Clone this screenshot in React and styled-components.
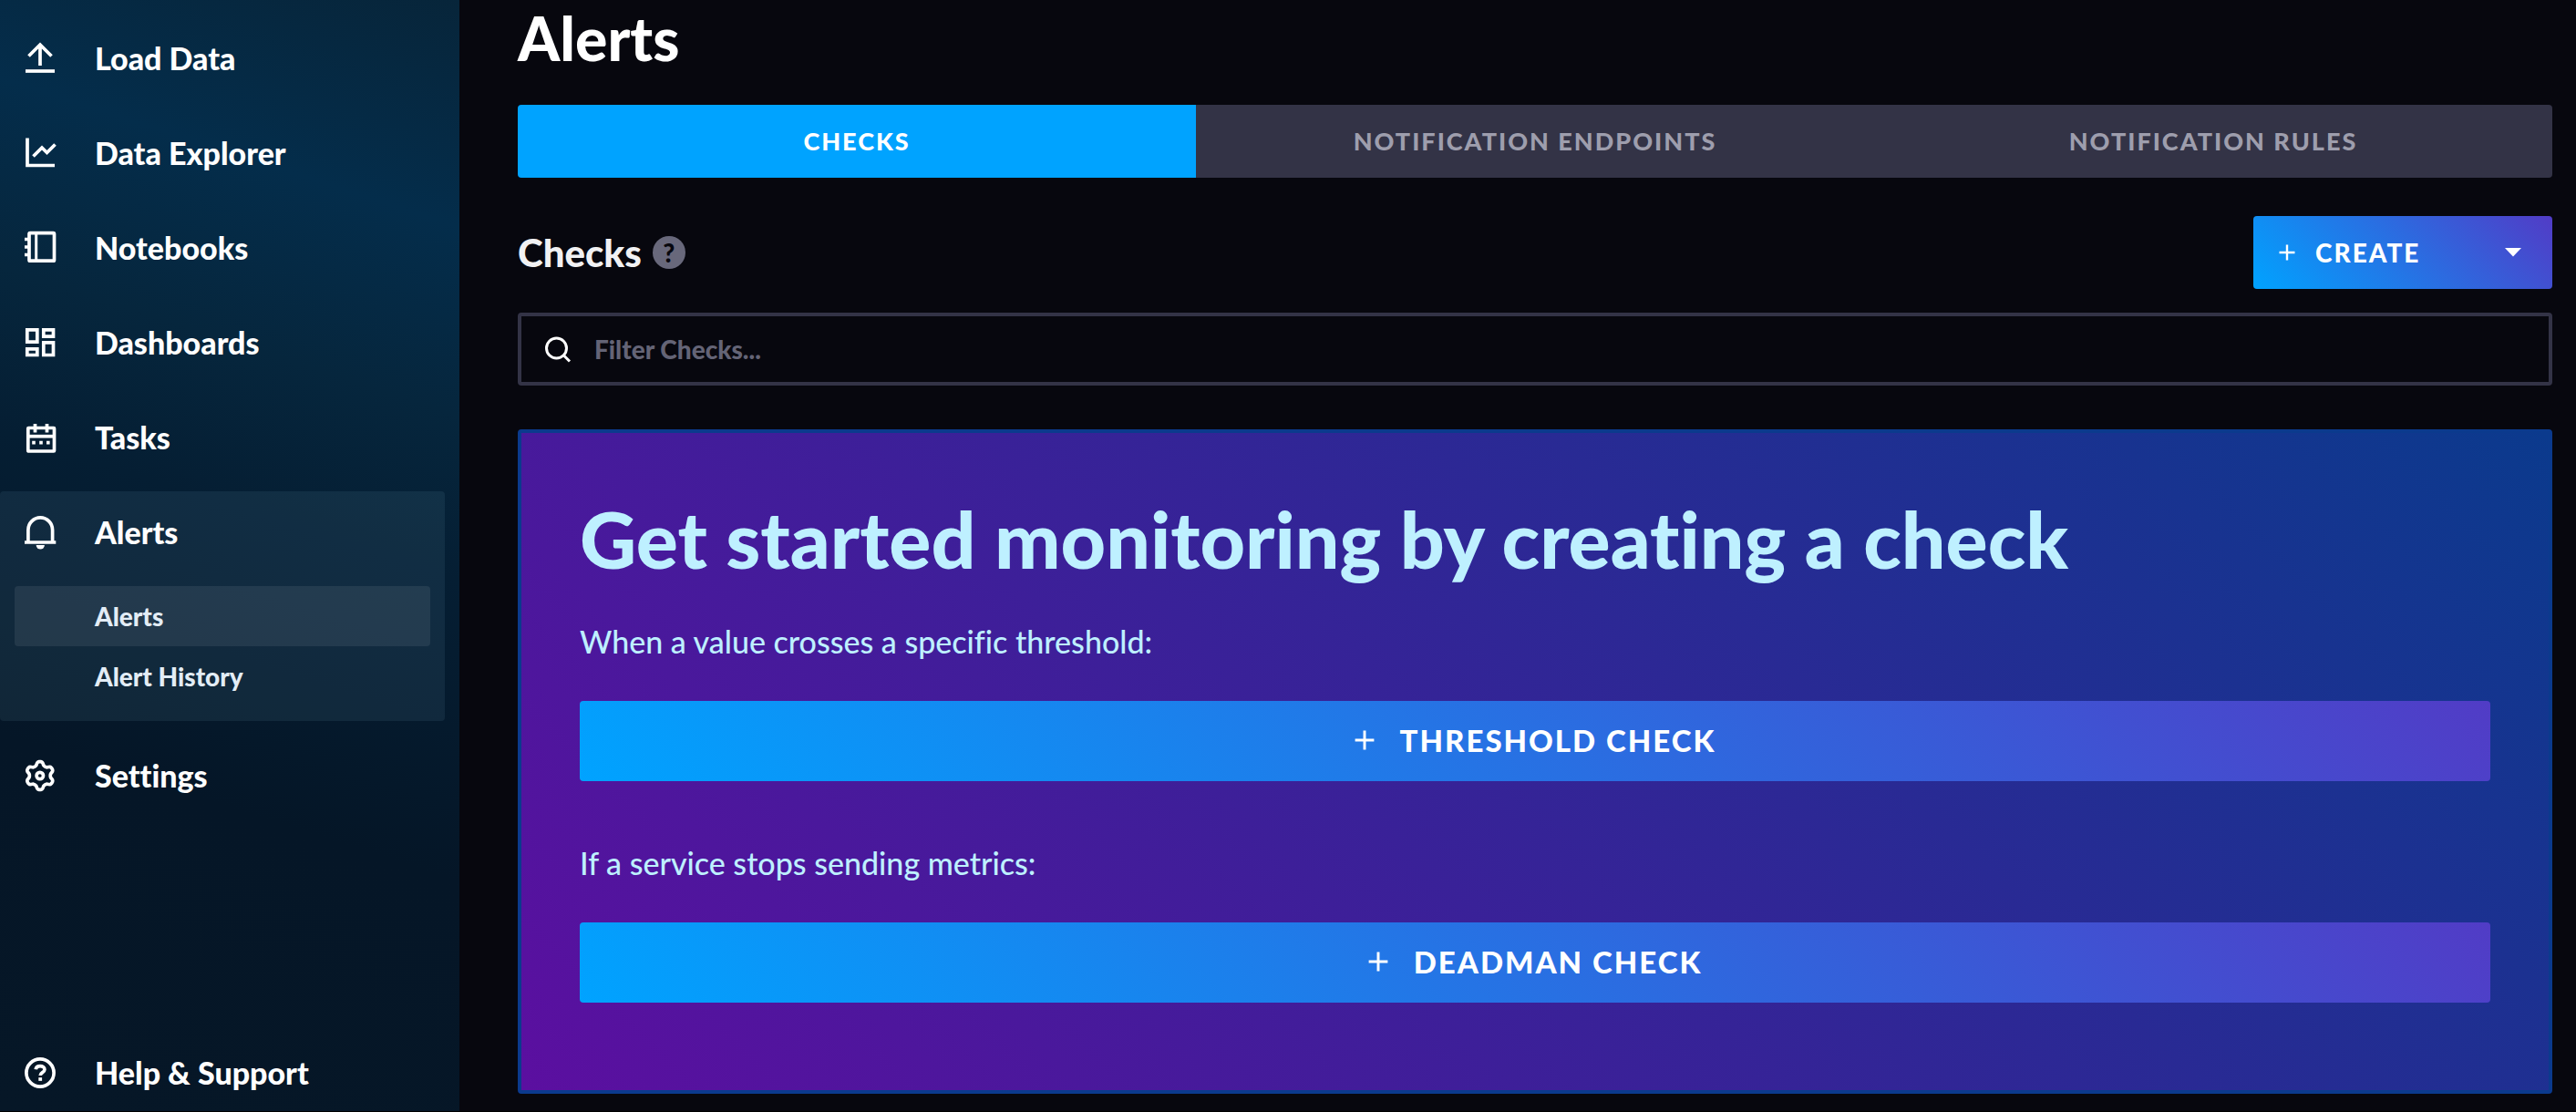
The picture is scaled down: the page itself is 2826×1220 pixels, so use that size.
import React from "react";
import styled, { createGlobalStyle, css } from "styled-components";

const font = `Lato, "Liberation Sans", sans-serif`;
const primaryGradient = "linear-gradient(45deg, #00a3ff, #513cc6)";

const GlobalStyle = createGlobalStyle`
  *, *::before, *::after { box-sizing: border-box; }
  body {
    margin: 0;
    background: #07070e;
    font-family: ${font};
    font-variant-ligatures: none;
  }
  h1, h2, h3, p, ul { margin: 0; padding: 0; }
  ul { list-style: none; }
  button, input { font-family: inherit; }
`;

const Page = styled.div`
  display: flex;
  min-height: 100vh;
  border-bottom: 1px solid #000;
`;

const Sidebar = styled.nav`
  display: flex;
  flex-direction: column;
  flex: 0 0 504px;
  padding-top: 19px;
  background: linear-gradient(
    198deg,
    #07253a 0%,
    #042d4b 18%,
    #06263d 33%,
    #051e33 46%,
    #051627 70%,
    #061727 100%
  );
`;

const NavList = styled.ul`
  display: flex;
  flex-direction: column;
  gap: 14px;
  margin-bottom: auto;
`;

const NavGroup = styled.li`
  margin-right: 16px;
  border-radius: 4px;
  ${(p) =>
    p.$active &&
    css`
      margin-bottom: 1px;
      padding-bottom: 16px;
      background: rgba(170, 230, 255, 0.08);
    `}
`;

const NavLink = styled.a`
  display: flex;
  align-items: center;
  gap: 43px;
  height: ${(p) => (p.$footer ? 84 : 90)}px;
  padding-left: 27px;
  color: #fff;
  font-size: 34px;
  font-weight: 900;
  line-height: 40px;
  text-decoration: none;
`;

const NavLabel = styled.span`
  padding-bottom: 1px;
`;

const SubList = styled.ul`
  padding: 14px 16px 0;
`;

const SubLink = styled.a`
  display: flex;
  align-items: center;
  height: 66px;
  padding-left: 88px;
  border-radius: 4px;
  background: ${(p) => (p.$active ? "rgba(255, 255, 255, 0.08)" : "none")};
  color: #e3edf6;
  font-size: 28px;
  font-weight: 900;
  text-decoration: none;
`;

const Icon = styled.svg`
  flex: none;
  overflow: visible;
  fill: none;
  stroke: currentColor;
  stroke-width: ${(p) => p.$weight || 3.7};
`;

const Main = styled.main`
  flex: 1;
  min-width: 0;
  padding: 6px 26px 19px 64px;
`;

const PageTitle = styled.h1`
  margin-bottom: 37px;
  color: #fff;
  font-size: 66px;
  font-weight: 900;
  line-height: 72px;
`;

const Tabs = styled.div`
  display: grid;
  grid-template-columns: repeat(3, 1fr);
  overflow: hidden;
  border-radius: 4px;
`;

const Tab = styled.button`
  height: 80px;
  padding: 0 0 2px;
  border: 0;
  background: ${(p) => (p.$active ? "#00a3ff" : "#333346")};
  color: ${(p) => (p.$active ? "#fff" : "#9e9ead")};
  font-size: 27px;
  font-weight: 900;
  letter-spacing: 2px;
`;

const SectionHeader = styled.header`
  display: flex;
  align-items: center;
  gap: 12px;
  margin: 42px 0 26px;
`;

const SectionTitle = styled.h2`
  color: #f1f1f3;
  font-size: 42px;
  font-weight: 900;
  line-height: 48px;
`;

const HelpBadge = styled.button`
  display: flex;
  align-items: center;
  justify-content: center;
  width: 36px;
  height: 36px;
  padding: 0;
  border: 0;
  border-radius: 50%;
  background: #68687b;
  color: #07070e;
  font-size: 28px;
  font-weight: 900;
  line-height: 36px;
`;

const CreateButton = styled.button`
  display: flex;
  align-items: center;
  gap: 22px;
  width: 328px;
  height: 80px;
  margin-left: auto;
  padding: 0 34px 0 28px;
  border: 0;
  border-radius: 4px;
  background: ${primaryGradient};
  color: #fff;
  font-size: 28px;
  font-weight: 900;
  letter-spacing: 2px;
`;

const Caret = styled.svg`
  margin-left: auto;
  fill: currentColor;
`;

const SearchBox = styled.label`
  display: flex;
  align-items: center;
  gap: 26px;
  height: 80px;
  margin-bottom: 48px;
  padding: 0 26px;
  border: 4px solid #333346;
  border-radius: 4px;
  color: #fff;
`;

const SearchInput = styled.input`
  flex: 1;
  min-width: 0;
  padding: 0;
  border: 0;
  outline: 0;
  background: none;
  color: #fff;
  font-size: 28px;
  font-weight: 900;

  &::placeholder {
    color: #646476;
    opacity: 1;
  }
`;

const Panel = styled.section`
  padding: 64px 64px 96px;
  border: 4px solid #0b3a8d;
  border-radius: 4px;
  background: linear-gradient(45deg, #5b0fa0, #0b3a8d) padding-box;
  color: #bef0ff;
`;

const PanelTitle = styled.h3`
  padding-top: 4px;
  margin-bottom: 41px;
  font-size: 86px;
  font-weight: 900;
  line-height: 96px;
`;

const CheckOption = styled.div`
  & + & {
    margin-top: 66px;
  }
`;

const OptionText = styled.p`
  margin-bottom: 41px;
  font-size: 34px;
  font-weight: 500;
  line-height: 48px;
`;

const OptionButton = styled.button`
  display: flex;
  align-items: center;
  justify-content: center;
  gap: 28px;
  width: 100%;
  height: 88px;
  padding: 0 0 2px;
  border: 0;
  border-radius: 4px;
  background: ${primaryGradient};
  color: #fff;
  font-size: 33px;
  font-weight: 900;
  letter-spacing: 2px;
`;

const gearPath =
  Array.from({ length: 120 }, (_, i) => {
    const angle = (i / 120) * Math.PI * 2;
    const wave = Math.cos(6 * (angle - Math.PI / 2));
    const radius = 13.4 + 2.1 * Math.tanh(1.6 * wave);
    const x = 16.8 + radius * Math.cos(angle);
    const y = 17 + radius * Math.sin(angle);
    return `${i ? "L" : "M"}${x.toFixed(2)} ${y.toFixed(2)}`;
  }).join("") + "Z";

const icons = {
  load: (
    <>
      <path d="M4.5 14.5 17 2l12.5 12.5M17 2v23" />
      <path d="M1 31h32" />
    </>
  ),
  explorer: (
    <>
      <path d="M3 .5v30h30" />
      <path d="m9.5 20.5 9.5-9.5 5.5 5.5 9-9" />
    </>
  ),
  notebooks: (
    <>
      <rect x="5" y=".6" width="27.5" height="30.6" rx="1" />
      <path d="M12.7 1v30" strokeWidth="3" />
      <path d="M0 7.5h5M0 16h5M0 24.5h5" />
    </>
  ),
  dashboards: (
    <path d="M2.8 2.8h11v13.4h-11zM20.8 2.8h10.7v7.3h-10.7zM2.8 23.8h11v6.7h-11zM20.8 16.8h10.7v13.7h-10.7z" />
  ),
  tasks: (
    <>
      <rect x="3.8" y="6.5" width="28.7" height="25.5" rx=".6" />
      <path d="M3 15.7h30" />
      <path d="M11.5 2v9.5M24.5 2v9.5" />
      <path d="M8.2 22.7h3.6M16.2 22.7h3.6M24 22.7h3.6" />
    </>
  ),
  bell: (
    <>
      <path d="M3.9 27V14.5a13.3 13.5 0 0 1 26.7 0V27" />
      <path d="M0 28h34.3" />
      <path d="M12.7 31h9.2a4.6 4.6 0 0 1-9.2 0z" fill="currentColor" stroke="none" />
    </>
  ),
  settings: (
    <>
      <path d={gearPath} />
      <circle cx="16.8" cy="17" r="3.7" />
    </>
  ),
  help: (
    <>
      <circle cx="17" cy="17" r="15.1" />
      <path d="M12.2 13.2c.3-2.4 2.2-3.6 4.9-3.6 2.9 0 4.8 1.5 4.8 3.8 0 3.4-4.7 3-4.7 6.6" />
      <path d="M15.3 24h3.8" />
    </>
  ),
};

const PlusIcon = ({ size }) => (
  <Icon $weight={2.4} width={size} height={size} viewBox="0 0 18 18" aria-hidden="true">
    <path d="M9 .5v17M.5 9h17" />
  </Icon>
);

const NavIcon = ({ name }) => (
  <Icon width="34" height="34" viewBox="0 0 34 34" aria-hidden="true">
    {icons[name]}
  </Icon>
);

const navItems = [
  { label: "Load Data", icon: "load" },
  { label: "Data Explorer", icon: "explorer" },
  { label: "Notebooks", icon: "notebooks" },
  { label: "Dashboards", icon: "dashboards" },
  { label: "Tasks", icon: "tasks" },
  { label: "Alerts", icon: "bell", children: ["Alerts", "Alert History"] },
  { label: "Settings", icon: "settings" },
];

const tabs = ["CHECKS", "NOTIFICATION ENDPOINTS", "NOTIFICATION RULES"];

const options = [
  { text: "When a value crosses a specific threshold:", action: "THRESHOLD CHECK" },
  { text: "If a service stops sending metrics:", action: "DEADMAN CHECK" },
];

export default function App() {
  return (
    <>
      <GlobalStyle />
      <Page>
        <Sidebar>
          <NavList>
            {navItems.map(({ label, icon, children }) => (
              <NavGroup key={label} $active={Boolean(children)}>
                <NavLink href="#">
                  <NavIcon name={icon} />
                  <NavLabel>{label}</NavLabel>
                </NavLink>
                {children && (
                  <SubList>
                    {children.map((child, i) => (
                      <li key={child}>
                        <SubLink href="#" $active={i === 0}>
                          {child}
                        </SubLink>
                      </li>
                    ))}
                  </SubList>
                )}
              </NavGroup>
            ))}
          </NavList>
          <NavLink href="#" $footer>
            <NavIcon name="help" />
            <NavLabel>Help &amp; Support</NavLabel>
          </NavLink>
        </Sidebar>

        <Main>
          <PageTitle>Alerts</PageTitle>
          <Tabs role="tablist">
            {tabs.map((tab, i) => (
              <Tab key={tab} type="button" role="tab" aria-selected={i === 0} $active={i === 0}>
                {tab}
              </Tab>
            ))}
          </Tabs>

          <SectionHeader>
            <SectionTitle>Checks</SectionTitle>
            <HelpBadge type="button">?</HelpBadge>
            <CreateButton type="button">
              <PlusIcon size={18} />
              CREATE
              <Caret width="18" height="10" viewBox="0 0 18 10" aria-hidden="true">
                <path d="M0 0h18L9 9.5z" />
              </Caret>
            </CreateButton>
          </SectionHeader>

          <SearchBox>
            <Icon $weight={3} width="28" height="28" viewBox="0 0 28 28" aria-hidden="true">
              <circle cx="12.5" cy="13" r="11" />
              <path d="m20 20.5 7 7" />
            </Icon>
            <SearchInput type="text" aria-label="Filter Checks" placeholder="Filter Checks..." />
          </SearchBox>

          <Panel>
            <PanelTitle>Get started monitoring by creating a check</PanelTitle>
            {options.map(({ text, action }) => (
              <CheckOption key={action}>
                <OptionText>{text}</OptionText>
                <OptionButton type="button">
                  <PlusIcon size={22} />
                  {action}
                </OptionButton>
              </CheckOption>
            ))}
          </Panel>
        </Main>
      </Page>
    </>
  );
}
